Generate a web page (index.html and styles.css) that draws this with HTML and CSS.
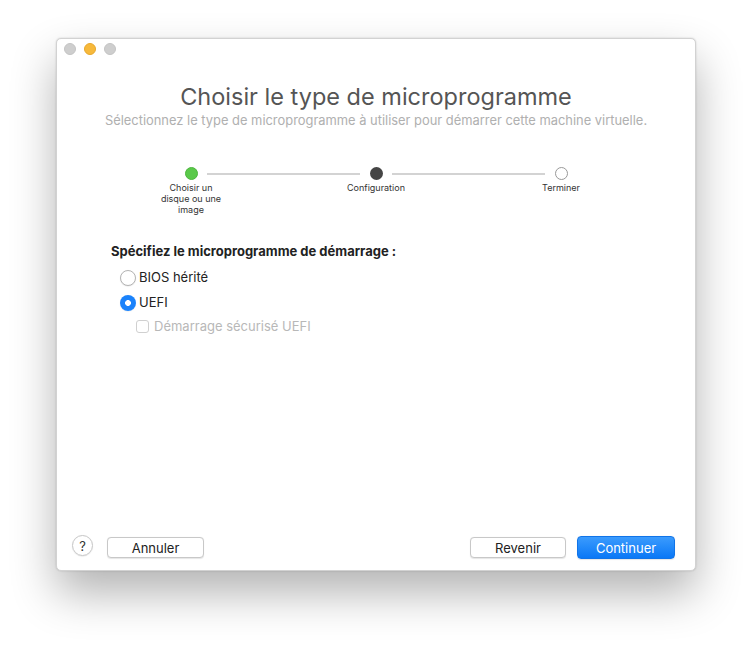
FILE: index.html
```html
<!DOCTYPE html>
<html lang="fr">
<head>
<meta charset="utf-8">
<link rel="stylesheet" href="styles.css">
</head>
<body>
<div class="window">
  <div class="titlebar">
    <span class="light gray"></span>
    <span class="light yellow"></span>
    <span class="light gray"></span>
  </div>
  <div class="content">
    <h1 class="title">Choisir le type de microprogramme</h1>
    <p class="subtitle">Sélectionnez le type de microprogramme à utiliser pour démarrer cette machine virtuelle.</p>

    <div class="stepper">
      <div class="step">
        <span class="dot done"></span>
        <span class="step-label">Choisir un disque ou une image</span>
      </div>
      <div class="line"></div>
      <div class="step">
        <span class="dot current"></span>
        <span class="step-label">Configuration</span>
      </div>
      <div class="line"></div>
      <div class="step">
        <span class="dot todo"></span>
        <span class="step-label">Terminer</span>
      </div>
    </div>

    <div class="form">
      <div class="form-title">Spécifiez le microprogramme de démarrage :</div>
      <label class="option"><span class="radio"></span>BIOS hérité</label>
      <label class="option"><span class="radio on"></span>UEFI</label>
      <label class="option sub disabled"><span class="check"></span>Démarrage sécurisé UEFI</label>
    </div>
  </div>
  <div class="footer">
    <span class="help">?</span>
    <button class="btn cancel">Annuler</button>
    <div class="spacer"></div>
    <button class="btn back">Revenir</button>
    <button class="btn primary">Continuer</button>
  </div>
</div>
</body>
</html>
```
FILE: styles.css
```css
* { box-sizing: border-box; }
html, body { margin: 0; padding: 0; background: #ffffff; }
body {
  font-family: Inter, "Liberation Sans", sans-serif;
  color: #222;
  padding: 38px 56px 0 56px;
  min-height: 645px;
}
.window {
  width: 640px;
  height: 533px;
  background: #ffffff;
  border-radius: 5px;
  border: 1px solid #d2d2d2;
  box-shadow: 0 22px 45px rgba(0,0,0,0.30), 0 0 2px rgba(0,0,0,0.18);
  display: flex;
  flex-direction: column;
}
.titlebar {
  display: flex;
  gap: 8px;
  padding: 4px 0 0 7px;
  height: 22px;
}
.light {
  width: 12px; height: 12px; border-radius: 50%;
  display: block;
}
.light.gray { background: #cecece; border: 1px solid #c4c4c4; }
.light.yellow { background: #f7b93b; border: 1px solid #e8a82c; }
.content {
  flex: 1;
  display: flex;
  flex-direction: column;
  align-items: center;
}
.title {
  margin: 20px 0 0 0;
  font-weight: 400;
  font-size: 23.5px;
  line-height: 31px;
  color: #555555;
  letter-spacing: 0;
}
.subtitle {
  margin: 1px 0 0 0;
  font-size: 12.9px;
  line-height: 16px;
  color: #b0b0b0;
}
.stepper {
  margin-top: 38px;
  display: flex;
  align-items: flex-start;
  width: 440px;
}
.step {
  width: 70px;
  display: flex;
  flex-direction: column;
  align-items: center;
  flex: none;
}
.dot {
  width: 13px; height: 13px; border-radius: 50%;
  display: block;
}
.dot.done { background: #5ac94a; border: 1px solid #4db63e; }
.dot.current { background: #454545; }
.dot.todo { background: #fff; border: 1px solid #999; }
.step-label {
  margin-top: 2px;
  font-size: 9px;
  line-height: 11px;
  color: #333;
  text-align: center;
}
.line {
  flex: 1;
  height: 2px;
  background: #d3d3d3;
  margin: 6px -19px 0 -19px;
}
.form {
  align-self: flex-start;
  margin: 28px 0 0 54px;
  display: flex;
  flex-direction: column;
}
.form-title {
  font-size: 13px;
  font-weight: 700;
  color: #222;
  line-height: 16px;
  margin-bottom: 6px;
}
.option {
  display: flex;
  align-items: center;
  font-size: 13px;
  line-height: 25px;
  color: #222;
  margin-left: 9px;
}
.radio {
  width: 16px; height: 16px; border-radius: 50%;
  border: 1px solid #b4b4b4;
  background: #fff;
  margin-right: 3px;
  display: block;
  box-shadow: 0 0.5px 1px rgba(0,0,0,0.1);
}
.radio.on {
  border: none;
  background: radial-gradient(circle, #ffffff 0 2.6px, #1a82fb 3.2px);
}
.option.sub { margin-left: 25px; margin-top: -1px; }
.option.disabled { color: #b8b8b8; }
.check {
  width: 13px; height: 13px; border-radius: 3px;
  border: 1px solid #d0d0d0;
  margin-right: 5px;
  display: block;
}
.footer {
  display: flex;
  align-items: center;
  padding: 0 20px 0 15px;
  height: 45px;
}
.help {
  width: 21px; height: 21px; border-radius: 50%;
  border: 1px solid #c6c6c6;
  font-size: 13px;
  display: flex; align-items: center; justify-content: center;
  color: #333;
  box-shadow: 0 0.5px 1px rgba(0,0,0,0.12);
  margin-top: -4px;
}
.btn {
  font-family: Inter, "Liberation Sans", sans-serif;
  font-size: 13px;
  height: 21px;
  padding: 0;
  border-radius: 4px;
  border: 1px solid #c8c8c8;
  background: #fff;
  color: #222;
  box-shadow: 0 0.5px 1px rgba(0,0,0,0.1);
}
.cancel { width: 97px; margin-left: 14px; }
.spacer { flex: 1; }
.back { width: 96px; }
.primary {
  width: 98px; height: 23px;
  margin-left: 11px;
  color: #fff;
  border: 1px solid #1174e8;
  background: linear-gradient(#3b9bfd, #0a78f6);
}
```
